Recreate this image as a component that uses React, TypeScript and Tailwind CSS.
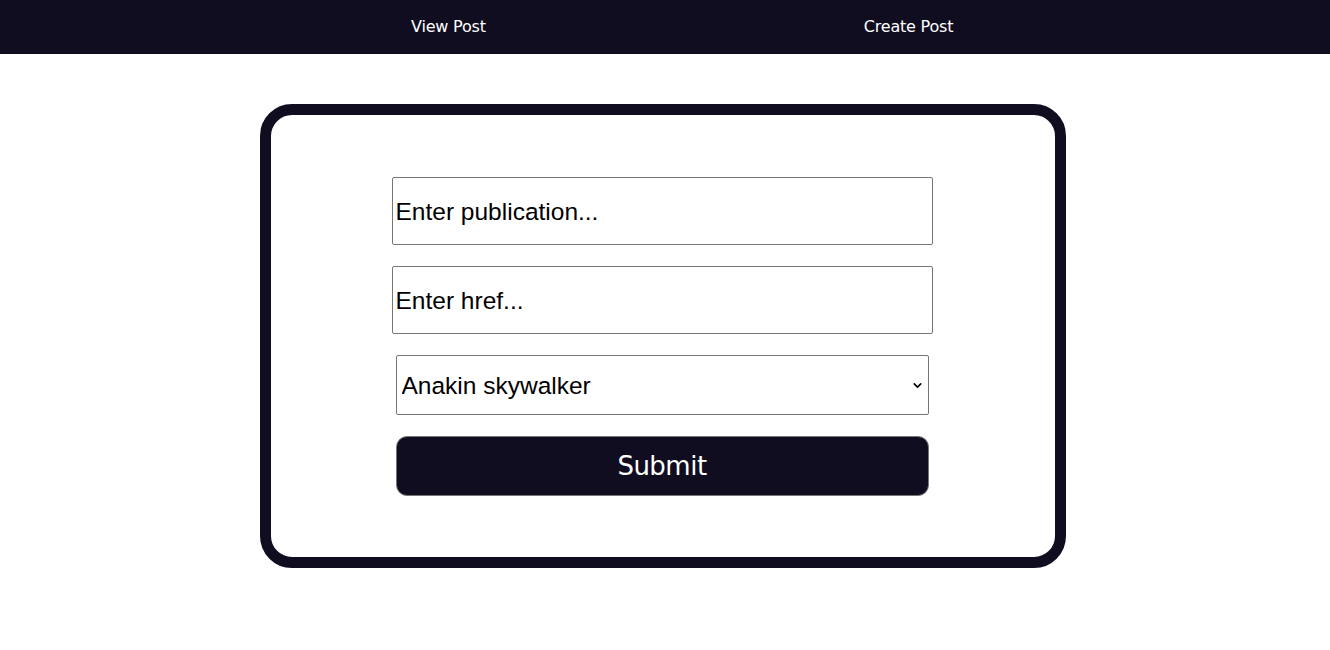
import { ChevronDownIcon } from 'lucide-react';

function NavBar() {
  return (
    <nav className="h-[54px] bg-[#0f0d1f] flex items-center pl-[411px] gap-[378px] text-white text-[16px] font-['DejaVu_Sans',Verdana,sans-serif] tracking-[-0.2px]">
      <a href="#">View Post</a>
      <a href="#">Create Post</a>
    </nav>
  );
}

function PostForm() {
  return (
    <form
      className="w-[806px] ml-[260px] mt-[50px] border-[11px] border-[#0f0d1f] rounded-[32px] bg-white pt-[62px] pb-[61px] pr-[2px] flex flex-col items-center font-['Liberation_Sans',Arial,sans-serif]"
      onSubmit={(e) => e.preventDefault()}
    >
      <input
        className="w-[541px] h-[68px] border border-[#767676] rounded-[2px] px-[3px] pt-[2px] text-[24.5px] text-black placeholder:text-black outline-none"
        placeholder="Enter publication..."
      />
      <input
        className="w-[541px] h-[68px] mt-[21px] border border-[#767676] rounded-[2px] px-[3px] pt-[2px] text-[24.5px] text-black placeholder:text-black outline-none"
        placeholder="Enter href..."
      />
      <div className="relative w-[533px] h-[60px] mt-[21px]">
        <select className="appearance-none w-full h-full border border-[#767676] rounded-[2px] pl-[5px] pt-[2px] text-[24.5px] text-black bg-white outline-none">
          <option>Anakin skywalker</option>
          <option>Obi-Wan Kenobi</option>
        </select>
        <ChevronDownIcon className="absolute right-[5px] top-[24px] w-[13px] h-[13px] pointer-events-none" strokeWidth={3} />
      </div>
      <button
        type="submit"
        className="w-[533px] h-[60px] mt-[21px] bg-[#0f0d1f] border border-[#767676] rounded-[11px] text-white text-[26px] font-['DejaVu_Sans',Verdana,sans-serif] tracking-[-0.5px]"
      >
        Submit
      </button>
    </form>
  );
}

export default function App() {
  return (
    <div className="min-h-[650px] bg-white">
      <NavBar />
      <PostForm />
    </div>
  );
}
